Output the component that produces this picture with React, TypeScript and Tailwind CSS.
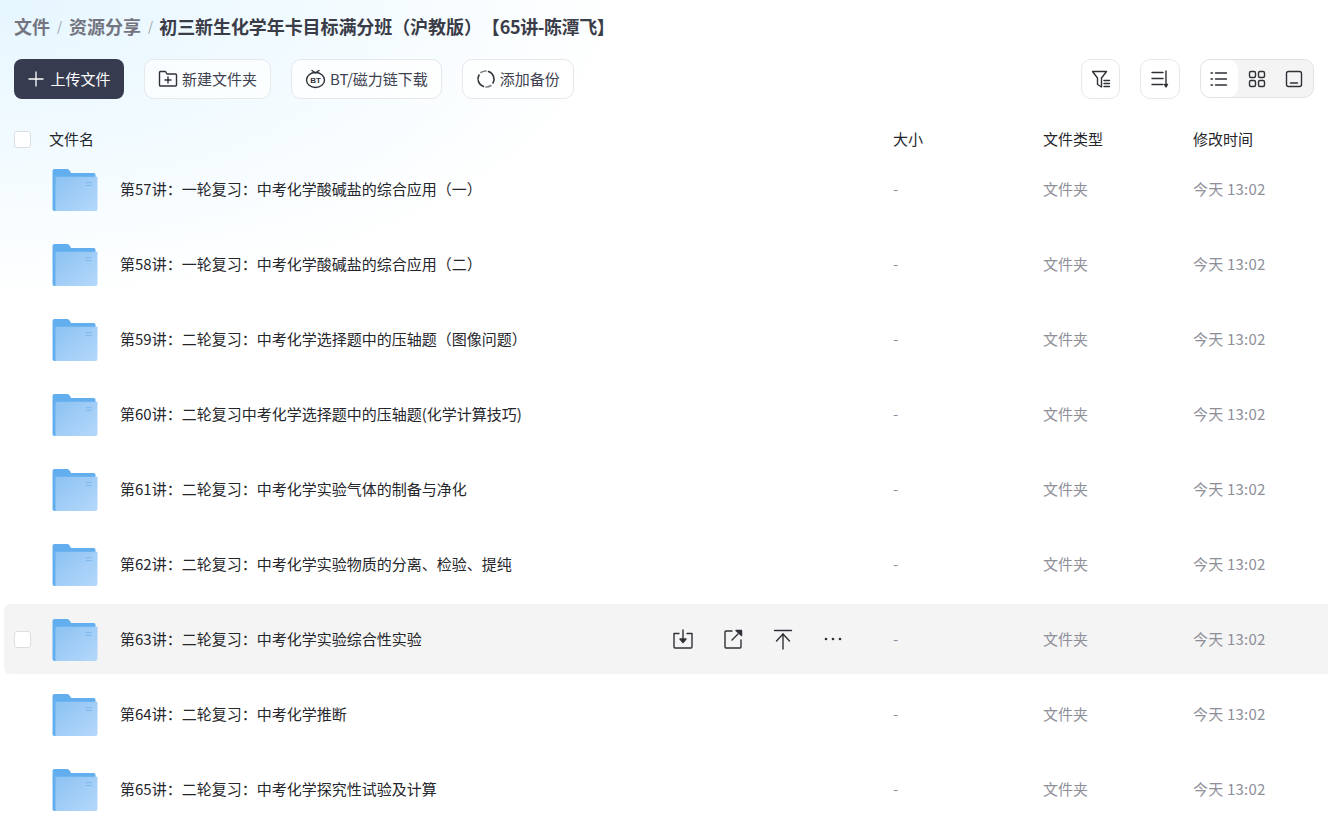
const files = [
  "第57讲\uFF1A一轮复习\uFF1A中考化学酸碱盐的综合应用\uFF08一\uFF09",
  "第58讲\uFF1A一轮复习\uFF1A中考化学酸碱盐的综合应用\uFF08二\uFF09",
  "第59讲\uFF1A二轮复习\uFF1A中考化学选择题中的压轴题\uFF08图像问题\uFF09",
  "第60讲\uFF1A二轮复习中考化学选择题中的压轴题(化学计算技巧)",
  "第61讲\uFF1A二轮复习\uFF1A中考化学实验气体的制备与净化",
  "第62讲\uFF1A二轮复习\uFF1A中考化学实验物质的分离、检验、提纯",
  "第63讲\uFF1A二轮复习\uFF1A中考化学实验综合性实验",
  "第64讲\uFF1A二轮复习\uFF1A中考化学推断",
  "第65讲\uFF1A二轮复习\uFF1A中考化学探究性试验及计算",
];

function Folder({ id }: { id: number }) {
  return (
    <svg width="46" height="43" viewBox="0 0 46 44" className="shrink-0">
      <defs>
        <linearGradient id={`f${id}`} x1="0" y1="0" x2="1" y2="1">
          <stop offset="0" stopColor="#8cc2f2" />
          <stop offset="1" stopColor="#b5d8fb" />
        </linearGradient>
      </defs>
      <path d="M0 3a2 2 0 0 1 2-2h13a3 3 0 0 1 2.500 1.500L19 5h23a2 2 0 0 1 2 2v37H2a2 2 0 0 1-2-2z" fill="#62aeee" />
      <path d="M3 9h43v33a2 2 0 0 1-2 2H3z" fill={`url(#f${id})`} />
      <path d="M34 15h6M34 18h6" stroke="#7db7ea" strokeWidth="1" />
    </svg>
  );
}

function ToolButton({ icon, label }: { icon: React.ReactNode; label: string }) {
  return (
    <button className="h-10 px-[13px] flex items-center gap-[4px] rounded-[10px] border border-[#e6e8ec] bg-white/70 text-[15px] text-[#3f4250] whitespace-nowrap">
      {icon}
      <span>{label}</span>
    </button>
  );
}

const stroke = { fill: "none", stroke: "#2f3137", strokeWidth: 1.4, strokeLinecap: "round", strokeLinejoin: "round" } as const;

function Row({ name, id, hover }: { name: string; id: number; hover?: boolean }) {
  return (
    <div className={`h-[70px] mb-[5px] flex items-center rounded-l-[6px] ${hover ? "bg-[#f4f4f4]" : ""}`}>
      <div className="w-[48px] pl-[10px] shrink-0">
        {hover && <div className="w-[17px] h-[17px] rounded-[3px] border border-[#dcdde0] bg-white" />}
      </div>
      <Folder id={id} />
      <div className="ml-[22px] flex-1 min-w-0 flex items-center text-[15px] text-[#25262b] whitespace-nowrap">
        <span className="flex-1">{name}</span>
        {hover && (
          <div className="flex items-center gap-[26px] mr-[48px]">
            <svg width="24" height="24" viewBox="0 0 24 24" {...stroke}>
              <path d="M8 6.500H3V20a1 1 0 0 0 1 1h16a1 1 0 0 0 1-1V6.500h-5" />
              <path d="M12 3v11" />
              <path d="M9 12h6l-3 3.500z" fill="#2f3137" />
            </svg>
            <svg width="24" height="24" viewBox="0 0 24 24" {...stroke}>
              <path d="M11 4H5a1 1 0 0 0-1 1v15a1 1 0 0 0 1 1h14a1 1 0 0 0 1-1v-7" />
              <path d="M11 13l6-6" />
              <path d="M15 3.500h5.500v5z" fill="#2f3137" />
            </svg>
            <svg width="24" height="24" viewBox="0 0 24 24" {...stroke}>
              <path d="M3.500 3.500h17" />
              <path d="M12 22V7" />
              <path d="M5.500 14L12 7l6.500 7" />
            </svg>
            <svg width="24" height="24" viewBox="0 0 24 24" fill="#2f3137">
              <circle cx="5" cy="12" r="1.300" />
              <circle cx="12" cy="12" r="1.300" />
              <circle cx="19" cy="12" r="1.300" />
            </svg>
          </div>
        )}
      </div>
      <div className="w-[150px] shrink-0 text-[15px] text-[#8e8f99]">-</div>
      <div className="w-[150px] shrink-0 text-[15px] text-[#8e8f99]">文件夹</div>
      <div className="w-[135px] shrink-0 text-[15px] text-[#8e8f99] tracking-[0.2px] whitespace-nowrap">今天 13:02</div>
    </div>
  );
}

export default function App() {
  return (
    <div
      className="w-[1328px] h-[824px] overflow-hidden bg-[radial-gradient(ellipse_620px_300px_at_0%_0%,#e6f6ff_0%,#f3fbff_55%,#ffffff_100%)] text-[#25262b]"
      style={{ fontFamily: '"Noto Sans CJK SC", "Noto Sans", sans-serif' }}
    >
      <div className="h-[59px] pl-[14px] pt-[13px] flex items-start">
        <div className="h-[26px] flex items-center text-[18px] font-bold whitespace-nowrap">
          <span className="text-[#74757f]">文件</span>
          <span className="mx-[7px] text-[13px] font-normal text-[#9a9ba3]">/</span>
          <span className="text-[#74757f]">资源分享</span>
          <span className="ml-[7px] mr-[6px] text-[13px] font-normal text-[#9a9ba3]">/</span>
          <span className="text-[#3a3c48] [text-spacing-trim:space-all] tracking-[-0.08px]">
            初三新生化学年卡目标满分班{"\uFF08"}沪教版{"\uFF09"}【<span className="tracking-[-0.4px]">65讲-陈潭飞】</span>
          </span>
        </div>
      </div>

      <div className="h-10 px-[14px] flex items-center">
        <button className="w-[110px] h-10 rounded-[8px] bg-[#373b50] text-white text-[15px] flex items-center justify-center gap-[5px]">
          <svg width="18" height="18" viewBox="0 0 18 18" fill="none" stroke="#fff" strokeWidth="1.300">
            <path d="M9 1.500v15M1.500 9h15" />
          </svg>
          <span>上传文件</span>
        </button>
        <div className="ml-5">
          <ToolButton
            label="新建文件夹"
            icon={
              <svg width="20" height="20" viewBox="0 0 20 20" {...stroke}>
                <path d="M1.500 3.500a1 1 0 0 1 1-1h5l1.500 2.500h8.500a1 1 0 0 1 1 1v10a1 1 0 0 1-1 1h-15a1 1 0 0 1-1-1z" />
                <path d="M10 8v6M7 11h6" />
              </svg>
            }
          />
        </div>
        <div className="ml-5">
          <ToolButton
            label="BT/磁力链下载"
            icon={
              <svg width="21" height="20" viewBox="0 0 21 20" {...stroke}>
                <ellipse cx="10.500" cy="11" rx="9" ry="7.500" />
                <path d="M7 1.500L10.500 4 14 1.500" />
                <text x="10.500" y="14" textAnchor="middle" fontSize="8" fontWeight="700" stroke="none" fill="#2f3137" fontFamily="Liberation Sans">BT</text>
              </svg>
            }
          />
        </div>
        <div className="ml-5">
          <ToolButton
            label="添加备份"
            icon={
              <svg width="20" height="20" viewBox="0 0 20 20" {...stroke} strokeWidth="1.600">
                <path d="M12.500 2.500A8 8 0 0 1 17 14" />
                <path d="M7.500 17.500A8 8 0 0 1 3 6" />
                <path d="M5 3.500A8 8 0 0 1 10 2" stroke="#7f8087" />
                <path d="M15 16.500A8 8 0 0 1 10 18" stroke="#7f8087" />
              </svg>
            }
          />
        </div>
        <div className="flex-1" />
        <button className="w-[39px] h-10 rounded-[10px] border border-[#e6e8ec] bg-white flex items-center justify-center">
          <svg width="20" height="20" viewBox="0 0 20 20" {...stroke}>
            <path d="M1.500 2.500h14l-5 6.500v9l-4-2.500V9z" />
            <path d="M13 11.500h5.500M13 14.500h5.500M13 17.500h5.500" />
          </svg>
        </button>
        <button className="ml-5 w-10 h-10 rounded-[10px] border border-[#e6e8ec] bg-white flex items-center justify-center">
          <svg width="20" height="20" viewBox="0 0 20 20" {...stroke}>
            <path d="M2 3.500h11M2 9.500h11M2 15.500h11" />
            <path d="M16 2v15" />
            <path d="M14.500 15.500h3L16 18z" fill="#2f3137" />
          </svg>
        </button>
        <div className="ml-5 w-[114px] h-[39px] self-start rounded-[10px] border border-[#e3e3e5] bg-[#f4f4f4] flex items-center">
          <div className="w-[37px] h-full rounded-[9px] bg-white flex items-center justify-center">
            <svg width="20" height="20" viewBox="0 0 20 20" className="-translate-x-px" {...stroke}>
              <path d="M6.500 4h11M6.500 10h11M6.500 16h11" />
              <path d="M2 4h1.500M2 10h1.500M2 16h1.500" />
            </svg>
          </div>
          <div className="w-[38px] flex items-center justify-center">
            <svg width="20" height="20" viewBox="0 0 20 20" {...stroke}>
              <rect x="2.500" y="2.500" width="6" height="6" rx="1.500" />
              <rect x="11.500" y="2.500" width="6" height="6" rx="1.500" />
              <rect x="2.500" y="11.500" width="6" height="6" rx="1.500" />
              <rect x="11.500" y="11.500" width="6" height="6" rx="1.500" />
            </svg>
          </div>
          <div className="w-[36px] flex items-center justify-center">
            <svg width="20" height="20" viewBox="0 0 20 20" {...stroke}>
              <rect x="2.500" y="2.500" width="15" height="15" rx="2" />
              <path d="M6.500 14h7" />
            </svg>
          </div>
        </div>
      </div>

      <div className="h-[55px] pt-[25px] flex items-center text-[15px] text-[#25262b]">
        <div className="w-[49px] pl-[14px] shrink-0">
          <div className="w-[17px] h-[17px] rounded-[3px] border border-[#dcdde0] bg-white" />
        </div>
        <div className="flex-1">文件名</div>
        <div className="w-[150px] shrink-0">大小</div>
        <div className="w-[150px] shrink-0">文件类型</div>
        <div className="w-[135px] shrink-0">修改时间</div>
      </div>

      <div className="ml-[4px]">
        {files.map((name, i) => (
          <Row key={name} name={name} id={i} hover={i === 6} />
        ))}
      </div>
    </div>
  );
}
